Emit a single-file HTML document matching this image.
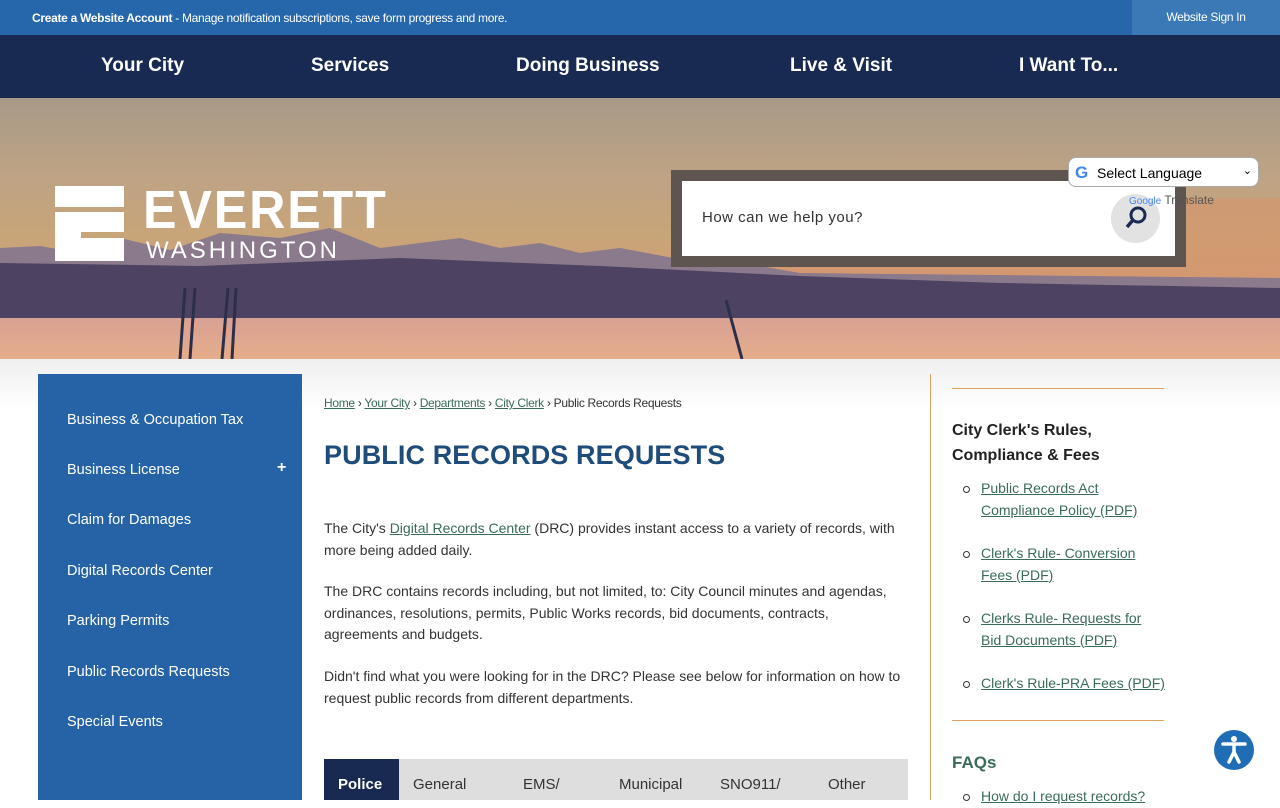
<!DOCTYPE html>
<html><head><meta charset="utf-8"><style>
*{margin:0;padding:0;box-sizing:border-box}
body{width:1280px;height:800px;overflow:hidden;font-family:"Liberation Sans",sans-serif;background:#fff;position:relative}
.top{height:35px;background:#2667ab;color:#fff;font-size:12px;position:relative}
.top .msg{position:absolute;left:32px;top:11px;letter-spacing:-0.3px}
.top .sign{position:absolute;right:0;top:0;width:148px;height:35px;background:#3b78b6;text-align:center;line-height:35px;font-size:12px;letter-spacing:-0.3px}
.nav{height:63px;background:#182a51;position:relative}
.nav span{position:absolute;top:20px;color:#fff;font-weight:bold;font-size:19px}
.hero{position:absolute;top:98px;left:0;width:1280px;height:261px;overflow:hidden;background:linear-gradient(180deg,#a89a88 0%,#bea384 30%,#c9a478 55%,#d49c7a 75%)}
.main{position:absolute;top:359px;left:0;width:1280px;height:441px;background:linear-gradient(180deg,#efefef 0,#fff 50px)}
.side{position:absolute;left:38px;top:374px;width:264px;height:426px;background:#2563a6}
.side div{position:absolute;left:29px;color:#fff;font-size:14.5px}
a{color:#3a6b5c;text-decoration:underline}
.crumb{position:absolute;left:324px;top:396px;font-size:12px;color:#333;letter-spacing:-0.3px}
h1{position:absolute;left:324px;top:440px;font-size:27px;color:#1f4c7a;font-weight:bold;letter-spacing:0.1px}
.p{position:absolute;left:324px;width:582px;font-size:14px;line-height:21.5px;color:#333}
.tabs{position:absolute;left:324px;top:759px;width:584px;height:41px;background:#dedede}
.tabs span{position:absolute;top:17px;font-size:15px;color:#333}
.vline{position:absolute;left:930px;top:374px;width:1px;height:426px;background:#e0a060}
.hr{position:absolute;left:952px;width:212px;height:1px;background:#e0a060}
.rt{position:absolute;left:952px;font-size:16px;font-weight:bold;color:#222;line-height:25px}
.li{position:absolute;left:981px;font-size:14px;line-height:21.5px}
.li:before{content:"";position:absolute;left:-18px;top:8px;width:5px;height:5px;border:1px solid #333;border-radius:50%}
</style></head><body>
<div class="top"><div class="msg"><b>Create a Website Account</b> - Manage notification subscriptions, save form progress and more.</div><div class="sign">Website Sign In</div></div>
<div class="nav"><span style="left:101px">Your City</span><span style="left:311px">Services</span><span style="left:516px">Doing Business</span><span style="left:790px">Live &amp; Visit</span><span style="left:1019px">I Want To...</span></div>
<div class="hero">
<svg width="1280" height="261" style="position:absolute;left:0;top:0">
<defs><linearGradient id="w" x1="0" y1="0" x2="0" y2="1"><stop offset="0" stop-color="#d9a193"/><stop offset="1" stop-color="#e5ad8a"/></linearGradient></defs>
<rect x="700" y="100" width="580" height="110" fill="#d8926a" opacity="0.5"/>
<polygon points="0,150 40,148 80,155 120,140 170,152 220,135 280,140 330,130 380,150 420,145 460,140 500,150 540,145 580,155 620,150 700,165 760,168 800,175 1280,180 1280,261 0,261" fill="#8a7a8c"/>
<polygon points="0,165 200,168 400,160 600,168 800,178 1000,185 1280,190 1280,261 0,261" fill="#4e4262"/>
<rect x="0" y="220" width="1280" height="41" fill="url(#w)"/>
<g stroke="#2b2f4a" stroke-width="3"><line x1="185" y1="190" x2="180" y2="261"/><line x1="195" y1="190" x2="190" y2="261"/><line x1="228" y1="190" x2="222" y2="261"/><line x1="236" y1="190" x2="232" y2="261"/><line x1="726" y1="202" x2="742" y2="261"/></g>
</svg>
<svg width="70" height="76" style="position:absolute;left:55px;top:88px"><path fill="#fff" d="M0 0H69V21H0Z M0 26H69V46H26V52H69V75H0Z"/></svg>
<div style="position:absolute;left:143px;top:84px;color:#fff;font-size:54px;font-weight:bold;letter-spacing:2px;line-height:56px;transform:scaleX(0.93);transform-origin:left">EVERETT</div>
<div style="position:absolute;left:146px;top:139px;color:#fff;font-size:24px;letter-spacing:3px">WASHINGTON</div>
<div style="position:absolute;left:671px;top:72px;width:515px;height:97px;background:#5e5550"></div>
<div style="position:absolute;left:682px;top:83px;width:493px;height:75px;background:#fff"><div style="position:absolute;left:20px;top:28px;font-size:15px;color:#333;letter-spacing:0.5px">How can we help you?</div>
<div style="position:absolute;left:429px;top:13px;width:49px;height:49px;border-radius:50%;background:#e2e2e2"><svg width="49" height="49"><circle cx="27" cy="21" r="7" fill="none" stroke="#1a2a50" stroke-width="3"/><line x1="22" y1="26" x2="16" y2="33" stroke="#1a2a50" stroke-width="3.5"/></svg></div></div>
<div style="position:absolute;left:1068px;top:59px;width:191px;height:30px;background:#fff;border:1px solid #aaa;border-radius:8px;font-size:14px;color:#000;padding:7px 0 0 28px">Select Language<span style="position:absolute;right:6px;top:6px;font-size:11px">&#8964;</span><span style="position:absolute;left:6px;top:5px;font-weight:bold;color:#4285f4;font-size:17px">G</span></div>
<div style="position:absolute;left:1129px;top:95px;font-size:12px;color:#555"><span style="font-size:10px;color:#4285f4">Google</span> Translate</div>
</div>
<div class="main"></div>
<div class="side">
<div style="top:38px">Business &amp; Occupation Tax</div>
<div style="top:88px">Business License</div><div style="left:239px;top:85px;font-size:16px;font-weight:bold">+</div>
<div style="top:138px">Claim for Damages</div>
<div style="top:189px">Digital Records Center</div>
<div style="top:239px">Parking Permits</div>
<div style="top:290px">Public Records Requests</div>
<div style="top:340px">Special Events</div>
</div>
<div class="crumb"><a>Home</a> › <a>Your City</a> › <a>Departments</a> › <a>City Clerk</a> › Public Records Requests</div>
<h1>PUBLIC RECORDS REQUESTS</h1>
<div class="p" style="top:518px">The City's <a>Digital Records Center</a> (DRC) provides instant access to a variety of records, with more being added daily.</div>
<div class="p" style="top:581px">The DRC contains records including, but not limited, to: City Council minutes and agendas, ordinances, resolutions, permits, Public Works records, bid documents, contracts, agreements and budgets.</div>
<div class="p" style="top:666px">Didn't find what you were looking for in the DRC? Please see below for information on how to request public records from different departments.</div>
<div class="tabs"><div style="position:absolute;left:0;top:0;width:75px;height:41px;background:#182a51"></div>
<span style="left:14px;color:#fff;font-weight:bold">Police</span><span style="left:89px">General</span><span style="left:199px">EMS/</span><span style="left:295px">Municipal</span><span style="left:396px">SNO911/</span><span style="left:504px">Other</span></div>
<div class="vline"></div>
<div class="hr" style="top:388px"></div>
<div class="rt" style="top:418px">City Clerk's Rules,<br>Compliance &amp; Fees</div>
<div class="li" style="top:478px"><a>Public Records Act<br>Compliance Policy (PDF)</a></div>
<div class="li" style="top:543px"><a>Clerk's Rule- Conversion<br>Fees (PDF)</a></div>
<div class="li" style="top:608px"><a>Clerks Rule- Requests for<br>Bid Documents (PDF)</a></div>
<div class="li" style="top:673px"><a>Clerk's Rule-PRA Fees (PDF)</a></div>
<div class="hr" style="top:720px"></div>
<div class="rt" style="top:750px;color:#3a6b5c;font-size:17px">FAQs</div>
<div class="li" style="top:786px"><a>How do I request records?</a></div>
<div style="position:absolute;left:1214px;top:730px;width:40px;height:40px;border-radius:50%;background:#1f6db5"><svg width="40" height="40"><circle cx="20" cy="9" r="3" fill="#fff"/><path d="M9 14L31 14M20 14V22M20 22L15 32M20 22L25 32" stroke="#fff" stroke-width="3.5" fill="none" stroke-linecap="round"/></svg></div>
</body></html>
